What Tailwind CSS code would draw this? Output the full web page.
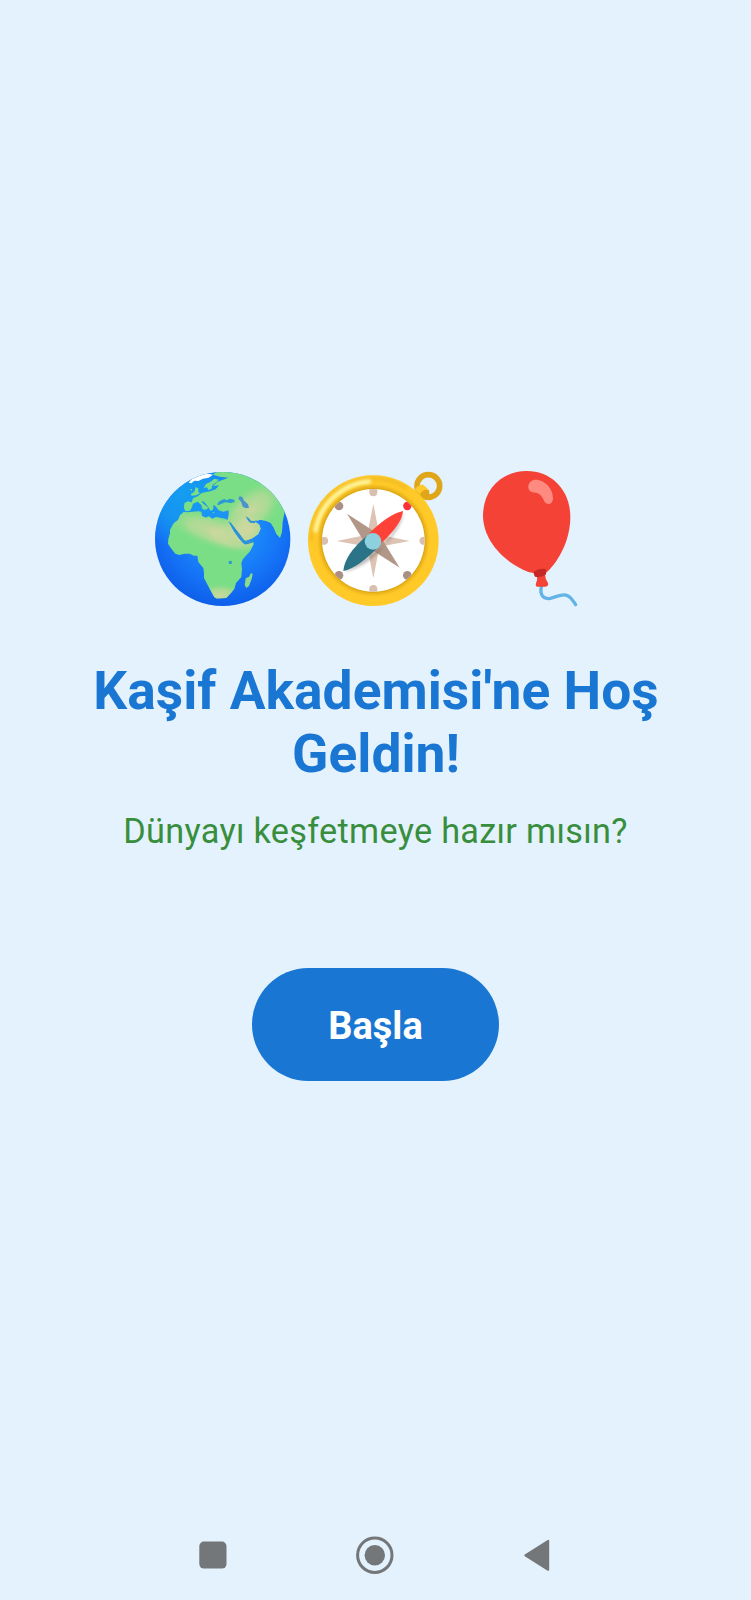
<!DOCTYPE html>
<html lang="tr">
<head>
<meta charset="utf-8">
<meta name="viewport" content="width=device-width, initial-scale=1">
<title>Kaşif Akademisi</title>
<script src="https://cdn.jsdelivr.net/npm/@tailwindcss/browser@4"></script>
</head>
<body class="bg-[#e3f2fd] font-['Roboto',sans-serif]">
<div class="flex h-[1600px] w-[751px] flex-col items-center overflow-hidden bg-[#e3f2fd]">
  <main class="flex w-full flex-1 flex-col items-center pt-[462px]">
    <div class="flex h-[155px] w-full pl-[145px]">
      <svg class="h-[155px] w-[155px] shrink-0" viewBox="0 0 465 465" role="img" aria-label="Dünya">
        <defs>
          <radialGradient id="sea" cx="240" cy="190" r="245" gradientUnits="userSpaceOnUse">
            <stop offset="0" stop-color="#2196f3"/><stop offset=".45" stop-color="#1a86fa"/><stop offset=".75" stop-color="#1470f5"/><stop offset="1" stop-color="#0d5ee8"/>
          </radialGradient>
          <radialGradient id="sky" cx="110" cy="90" r="170" gradientUnits="userSpaceOnUse">
            <stop offset="0" stop-color="#159df0"/><stop offset=".5" stop-color="#159bf0" stop-opacity=".8"/><stop offset="1" stop-color="#159bf0" stop-opacity="0"/>
          </radialGradient>
          <radialGradient id="sand"><stop offset="0" stop-color="#e0d5a4" stop-opacity=".8"/><stop offset=".5" stop-color="#d6d8a0" stop-opacity=".5"/><stop offset="1" stop-color="#79de85" stop-opacity="0"/></radialGradient>
          <clipPath id="disc"><ellipse cx="233" cy="231" rx="203" ry="201"/></clipPath>
          <clipPath id="land">
            <path d="M116 150L126 151L144 149L160 148L169 149L171 162L183 167L191 163L202 170L213 165L239 170L247 174L256 190L267 210L280 228L294 244L301 248L325 241L325 248L315 268L294 291L289 303L291 321L289 345L273 363L268 381L258 393L244 408L216 410L208 406L198 388L188 369L177 348L177 333L175 318L160 300L157 281L146 281L134 275L119 275L103 279L91 275L79 260L69 245L70 231L75 214L75 203L86 184L99 174L105 160Z"/>
            <path d="M204 38L225 20H300L365 50L425 120L418 155L413 180L411 210L405 228L394 216L386 197L377 183L362 176L345 173L335 177L328 178L335 182L343 188L347 200L340 216L322 229L303 236L297 234L284 216L269 198L259 184L247 176L251 160L251 145L235 149L221 145L213 134L206 128L204 143L196 146L190 136L181 124L174 117L170 120L180 129L190 137L183 143L174 140L169 129L158 119L144 125L141 135L135 146L121 147L117 138L118 124L128 118L140 121L144 109L158 103L170 93L184 90L196 88L212 82L222 70L204 73L216 60L250 47L225 44Z"/>
            <path d="M176 78L183 66L196 60L208 50L222 53L212 62L202 70L200 80L190 84L186 76Z"/>
          </clipPath>
        </defs>
        <g clip-path="url(#disc)">
          <rect width="465" height="465" fill="url(#sea)"/>
          <rect width="465" height="465" fill="url(#sky)"/>
          <g clip-path="url(#land)">
            <rect width="465" height="465" fill="#79de85"/>
            <ellipse cx="205" cy="207" rx="160" ry="54" transform="rotate(18 205 207)" fill="url(#sand)"/>
            <ellipse cx="260" cy="225" rx="110" ry="48" transform="rotate(14 260 225)" fill="url(#sand)"/>
            <ellipse cx="315" cy="150" rx="135" ry="70" transform="rotate(-42 315 150)" fill="url(#sand)"/>
            <ellipse cx="225" cy="400" rx="75" ry="38" fill="url(#sand)"/>
            <ellipse cx="315" cy="205" rx="80" ry="60" fill="url(#sand)"/>
          </g>
          <path d="M131 62L142 49L156 40L178 33L204 38L191 47L174 50L160 57L148 56L139 64Z" fill="#fff"/>
          <path d="M151 76L160 79L160 90L165 94L153 100L140 101L137 96L146 91L150 84Z" fill="#79de85"/>
          <path d="M168 134L182 138L177 145ZM202 150L210 152L204 154ZM135 81L142 82L139 87Z" fill="#79de85"/>
          <path d="M318 333L323 336L320 351L312 372L304 378L299 370L302 349L312 344Z" fill="#8cdb8b"/>
          <path d="M217 126L223 118L237 111L246 115L254 110L268 113L269 120L258 123L240 121L228 126L219 130Z" fill="#2b98d7"/>
          <path d="M284 102L293 106L296 115L309 127L312 137L303 139L293 134L289 121L280 110Z" fill="#4b92d0"/>
          <path d="M302 163L311 168L318 176L329 177L336 173L329 184L315 182L308 174Z" fill="#3194d4"/>
          <path d="M253 178L267 194L281 212L299 236L325 235L323 242L301 246L287 234L274 216L264 201Z" fill="#2e94d5"/>
          <path d="M251 298L260 296L260 306L252 306Z" fill="#2b98d7"/>
        </g>
      </svg>
      <svg class="h-[155px] w-[150px] shrink-0" viewBox="0 0 450 465" role="img" aria-label="Pusula">
        <defs>
          <filter id="soft" x="-30%" y="-30%" width="160%" height="160%"><feGaussianBlur stdDeviation="4"/></filter>
          <clipPath id="face"><circle cx="220" cy="235" r="154"/></clipPath>
        </defs>
        <circle cx="385" cy="72" r="34" fill="none" stroke="#dfa61a" stroke-width="17"/>
        <path d="M344 84Q354 66 371 69L388 86Q389 108 377 112Z" fill="#fdc92c"/>
        <path d="M360 98Q366 81 386 84L388 96Q389 108 377 112Z" fill="#dfa61a"/>
        <circle cx="220" cy="236" r="196" fill="#ffc928"/>
        <path d="M34 236A186 186 0 0 1 320 79" fill="none" stroke="#f3bd20" stroke-width="10" filter="url(#soft)"/>
        <path d="M47 205Q57 145 102 104Q150 62 207 59" fill="none" stroke="#fff59b" stroke-width="14" stroke-linecap="round" filter="url(#soft)"/>
        <circle cx="220" cy="235" r="158" fill="none" stroke="#dda713" stroke-width="8" filter="url(#soft)"/>
        <circle cx="220" cy="235" r="157" fill="#dda713"/>
        <circle cx="220" cy="235" r="154" fill="#fff"/>
        <g clip-path="url(#face)">
          <path d="M208 70H232V91A12 12 0 0 1 208 91ZM208 400H232V381A12 12 0 0 0 208 381ZM50 225V248H76A12 12 0 0 0 76 225ZM390 225V248H367A12 12 0 0 1 367 225Z" fill="#d8bfb0"/>
          <g fill="#ac8f84"><circle cx="117" cy="132" r="13"/><circle cx="117" cy="340" r="13"/><circle cx="322" cy="340" r="13"/></g>
          <circle cx="322" cy="132" r="12.5" fill="#fb3038"/>
        </g>
        <path d="M220 126L238 218L329 237L238 254L220 349L202 254L110 237L202 218Z" fill="#dcc3b3"/>
        <path d="M141 155L238 218L299 317L202 255Z" fill="#b29788"/>
        <path d="M313 150Q300 205 250 254L132 331Q200 313 250 256Z" fill="#544b48" opacity=".4" filter="url(#soft)"/>
        <path d="M309 147Q307 185 243 244L204 218Q262 158 309 147Z" fill="#ff4237"/>
        <path d="M130 327Q134 277 200 222L238 251Q178 316 130 327Z" fill="#2b7487"/>
        <circle cx="219" cy="238" r="25" fill="#8dd1df"/>
      </svg>
      <svg class="h-[155px] w-[155px] shrink-0" viewBox="0 0 465 465" role="img" aria-label="Balon">
        <path d="M275 370C268 397 278 413 301 409C326 403 346 389 362 408Q371 418 377 428" fill="none" stroke="#62b3e8" stroke-width="10" stroke-linecap="round" stroke-linejoin="round"/>
        <path d="M229 27C303 26 361 83 361 165C361 229 330 294 290 331Q262 337 235 330C168 304 99 240 99 160C100 80 157 28 229 27Z" fill="#f44336"/>
        <path d="M261 340L285 338Q286 353 294 363Q297 373 286 374Q272 375 260 374Q255 372 258 364Q263 355 261 340Z" fill="#f44336"/>
        <path d="M254 327Q270 319 286 321Q291 327 287 338Q272 348 255 344Q248 334 254 327Z" fill="#c62828"/>
        <path d="M255 53C282 51 310 79 309 110C308 128 290 131 283 118C274 98 265 92 248 91C229 86 230 57 255 53Z" fill="#ff8a80"/>
      </svg>
    </div>
    <h1 class="mt-[43px] pl-px text-center text-[53.3px] leading-[63px] font-bold tracking-[.04px] whitespace-nowrap text-[#1976d2]">Kaşif Akademisi'ne Hoş<br>Geldin!</h1>
    <p class="mt-[25px] text-center text-[34.25px] leading-[40px] tracking-[.3px] whitespace-nowrap text-[#388e3c]">Dünyayı keşfetmeye hazır mısın?</p>
    <button class="mt-[116.5px] flex h-[113px] w-[247px] items-center justify-center rounded-full bg-[#1976d2] pt-[4px] text-[38px] leading-[45px] font-bold text-white">Başla</button>
  </main>
  <nav class="flex h-[90px] w-full items-center pl-[199px] text-[#737779]">
    <svg class="h-[28px] w-[28px]" viewBox="0 0 28 28" fill="currentColor"><rect x=".3" y=".6" width="27.2" height="27" rx="4.5"/></svg>
    <svg class="ml-[128px] h-[40px] w-[40px]" viewBox="0 0 40 40"><circle cx="19.8" cy="20.2" r="17.2" fill="none" stroke="currentColor" stroke-width="3"/><circle cx="19.8" cy="20.2" r="10.2" fill="currentColor"/></svg>
    <svg class="ml-[128px] h-[34px] w-[28px]" viewBox="0 0 28 34" fill="currentColor" stroke="currentColor" stroke-width="2" stroke-linejoin="round"><path d="M2.3 17.3L25.2 2.8V31.8Z"/></svg>
  </nav>
</div>
</body>
</html>
